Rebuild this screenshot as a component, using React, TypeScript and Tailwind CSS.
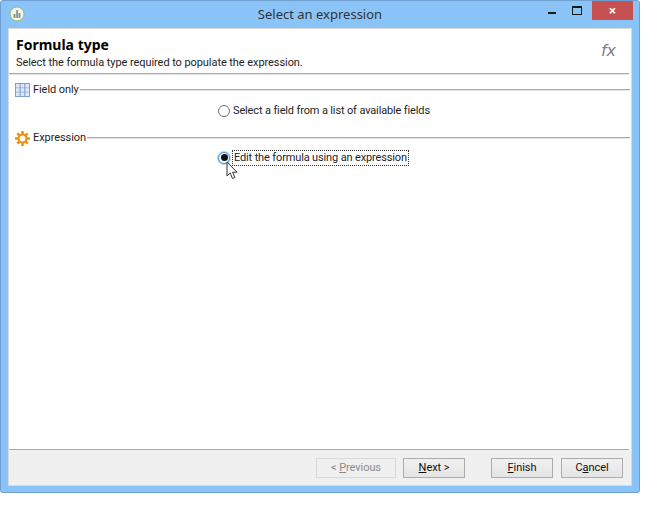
import type { ReactNode } from "react";

const FONT = "font-['Roboto','Noto_Sans',sans-serif]";

function AppIcon() {
  return (
    <svg width="16" height="16" viewBox="0 0 16 16">
      <circle cx="8" cy="8" r="7" fill="#f4f6f2" stroke="#8fbf6a" strokeWidth="1" />
      <path d="M4.5 12V8h2v4zM7.2 12V4h1.8v8zM9.5 12V7h2v5z" fill="#8a9494" />
    </svg>
  );
}

function GridIcon() {
  return (
    <svg width="15" height="14" viewBox="0 0 15 14" className="shrink-0">
      <rect width="15" height="14" fill="#7f9fd0" />
      <g fill="#dfe8f6">
        <rect x="1" y="1" width="3.6" height="3.6" />
        <rect x="5.7" y="1" width="3.6" height="3.6" />
        <rect x="10.4" y="1" width="3.6" height="3.6" />
        <rect x="1" y="5.2" width="3.6" height="3.6" />
        <rect x="5.7" y="5.2" width="3.6" height="3.6" />
        <rect x="10.4" y="5.2" width="3.6" height="3.6" />
        <rect x="1" y="9.4" width="3.6" height="3.6" />
        <rect x="5.7" y="9.4" width="3.6" height="3.6" />
        <rect x="10.4" y="9.4" width="3.6" height="3.6" />
      </g>
    </svg>
  );
}

function GearIcon() {
  return (
    <svg width="15" height="15" viewBox="0 0 15 15" className="shrink-0">
      <g stroke="#ee9011" strokeWidth="2.6">
        <path d="M7.5 0v15M0 7.5h15M2.3 2.3l10.4 10.4M12.7 2.3L2.3 12.7" />
      </g>
      <circle cx="7.5" cy="7.5" r="4" fill="#fbfaf5" stroke="#ee9011" strokeWidth="2.2" />
    </svg>
  );
}

function Cursor() {
  return (
    <svg width="12" height="19" viewBox="0 0 12 19" className="absolute left-[7px] top-[8px]">
      <path d="M1 1v14l3.2-3 2.3 5.5 2.4-1-2.3-5.3H11z" fill="#fff" stroke="#333" strokeWidth="1" />
    </svg>
  );
}

function Section({ icon, label, children }: { icon: ReactNode; label: string; children: ReactNode }) {
  return (
    <div>
      <div className="flex h-[16px] items-center pl-[6px] pr-[1px]">
        {icon}
        <span className="ml-[3px] text-[#1e1e1e]">{label}</span>
        <div className="ml-[1px] h-[2px] flex-1 border-t border-[#a9a9a9] bg-[#e6e6e6]" />
      </div>
      {children}
    </div>
  );
}

function Btn({ children, disabled, className }: { children: ReactNode; disabled?: boolean; className: string }) {
  return (
    <button
      className={`flex h-[20px] items-center justify-center border text-[11px] ${
        disabled
          ? "border-[#d9d9d9] bg-[#efefef] text-[#8b8b8b]"
          : "border-[#acacac] bg-gradient-to-b from-[#f0f0f0] to-[#e5e5e5] text-[#111]"
      } ${className}`}
    >
      {children}
    </button>
  );
}

export default function App() {
  return (
    <div className={`h-[523px] w-[670px] bg-white text-[11px] leading-[14px] tracking-[-0.07px] ${FONT}`}>
      <div className="flex h-[493px] w-[640px] flex-col rounded-[3px] border border-[#6f9fce] bg-[#8ac3f8] px-[7px] pb-[6px]">
        <div className="relative flex h-[27px] shrink-0 items-center justify-center pb-[2px]">
          <div className="absolute left-[1px] top-[5px]">
            <AppIcon />
          </div>
          <span className="font-['Noto_Sans',sans-serif] text-[13px] tracking-normal text-[#333]">
            Select an expression
          </span>
          <div className="absolute right-[-1px] top-0 flex items-start">
            <div className="flex h-[19px] w-[24px] items-center justify-center pl-[3px] pt-[5px]">
              <div className="h-[2px] w-[8px] bg-[#1a1a1a]" />
            </div>
            <div className="ml-[3px] flex h-[19px] w-[24px] items-center justify-center pb-[1px]">
              <div className="h-[9px] w-[10px] border border-t-2 border-[#1a1a1a]" />
            </div>
            <div className="ml-[3px] flex h-[19px] w-[41px] items-center justify-center bg-[#c75050] text-[13px] font-bold text-white">
              ×
            </div>
          </div>
        </div>

        <div className="flex flex-1 flex-col border border-[#d9d9d9] bg-white">
          <div className="relative h-[44px] shrink-0 pl-[7px] pt-[8px]">
            <h1 className="font-['Noto_Sans',sans-serif] text-[14px] font-bold leading-[16px] tracking-normal text-black">
              Formula type
            </h1>
            <p className="mt-[3px] text-[#1e1e1e]">Select the formula type required to populate the expression.</p>
            <span className="absolute right-[15px] top-[12px] font-['DejaVu_Sans',sans-serif] text-[16px] italic leading-[20px] text-[#808080]">
              fx
            </span>
          </div>
          <div className="mr-[2px] h-[2px] shrink-0 border-t border-[#a9a9a9] bg-[#e6e6e6]" />

          <div className="flex-1 pt-[7px]">
            <Section icon={<GridIcon />} label="Field only">
              <div className="flex h-[26px] items-center pl-[209px]">
                <span className="mb-[1px] h-[12px] w-[12px] rounded-full border border-[#707070] bg-white" />
                <span className="ml-[3px] tracking-[-0.14px] text-[#1e1e1e]">
                  Select a field from a list of available fields
                </span>
              </div>
            </Section>
            <div className="h-[6px]" />
            <Section icon={<GearIcon />} label="Expression">
              <div className="flex h-[24px] items-center pl-[209px]">
                <span className="relative mb-[1px] flex h-[12px] w-[12px] items-center justify-center rounded-full border border-[#3b8fd8] bg-white shadow-[0_0_0_1px_#b9d9f5]">
                  <span className="h-[7px] w-[7px] rounded-full bg-[#111]" />
                  <Cursor />
                </span>
                <span className="ml-[2px] border border-dotted border-[#333] px-[1px] tracking-[-0.14px] text-[#1e1e1e]">
                  Edit the formula using an expression
                </span>
              </div>
            </Section>
          </div>

          <div className="mr-[2px] h-[1px] shrink-0 bg-[#a9a9a9]" />
          <div className="flex h-[35px] shrink-0 items-start bg-[#f0f0f0] pl-[307px] pt-[8px]">
            <Btn disabled className="w-[80px]">
              &lt;&nbsp;<span className="underline">P</span>revious
            </Btn>
            <Btn className="ml-[7px] w-[62px]">
              <span className="underline">N</span>ext &gt;
            </Btn>
            <Btn className="ml-[26px] w-[62px]">
              <span className="underline">F</span>inish
            </Btn>
            <Btn className="ml-[8px] w-[62px]">
              C<span className="underline">a</span>ncel
            </Btn>
          </div>
        </div>
      </div>
    </div>
  );
}
